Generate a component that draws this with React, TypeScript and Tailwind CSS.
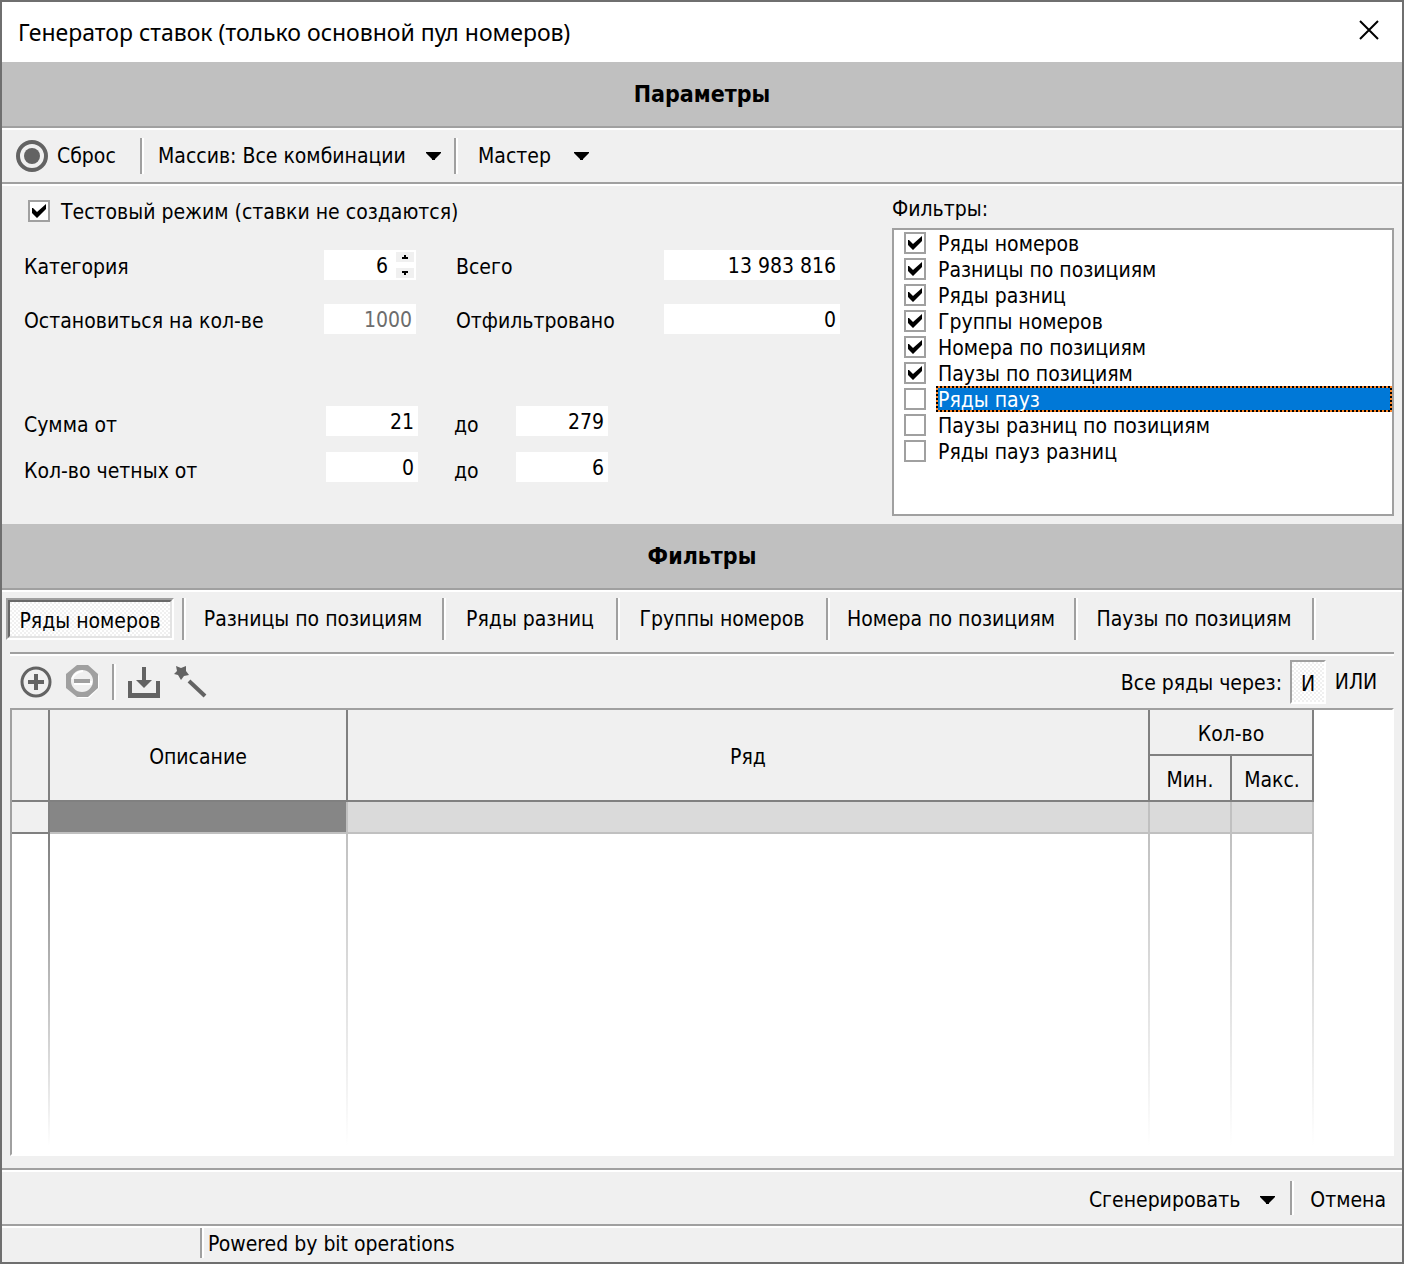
import React, { useState } from 'react';

const filterOptions = [
  { id: 'number-rows', label: 'Ряды номеров', checked: true },
  { id: 'position-diffs', label: 'Разницы по позициям', checked: true },
  { id: 'diff-rows', label: 'Ряды разниц', checked: true },
  { id: 'number-groups', label: 'Группы номеров', checked: true },
  { id: 'position-numbers', label: 'Номера по позициям', checked: true },
  { id: 'position-pauses', label: 'Паузы по позициям', checked: true },
  { id: 'pause-rows', label: 'Ряды пауз', checked: false },
  { id: 'position-diff-pauses', label: 'Паузы разниц по позициям', checked: false },
  { id: 'diff-pause-rows', label: 'Ряды пауз разниц', checked: false }
];

const tabs = [
  { label: 'Ряды номеров', width: 'w-[168px]' },
  { label: 'Разницы по позициям', width: 'w-[256px]' },
  { label: 'Ряды разниц', width: 'w-[170px]' },
  { label: 'Группы номеров', width: 'w-[206px]' },
  { label: 'Номера по позициям', width: 'w-[244px]' },
  { label: 'Паузы по позициям', width: 'w-[234px]' }
];

// Grooves: a grey line with a white one next to it
const groove = 'h-1 shrink-0 border-t-2 border-b-2 border-t-[#a0a0a0] border-b-white';
const vGroove = 'w-1 shrink-0 border-l-2 border-r-2 border-l-[#a0a0a0] border-r-white';

// Dithered fill of a pressed button
const dither = 'bg-[repeating-conic-gradient(#ffffff_0_25%,#f0f0f0_0_50%)] bg-[length:4px_4px]';

const SectionTitle: React.FC<{ children: React.ReactNode }> = ({ children }) => (
  <>
    <h2 className="flex h-16 shrink-0 items-center justify-center bg-[#c0c0c0] text-[23px] font-bold">
      {children}
    </h2>
    <div className={groove} />
  </>
);

const Arrow: React.FC = () => (
  <svg width="16" height="8" viewBox="0 0 16 8">
    <path d="M0 0h15v1l-6 6v1h-3v-1l-6-6z" />
  </svg>
);

interface CheckboxProps {
  id: string;
  defaultChecked: boolean;
}

const Checkbox: React.FC<CheckboxProps> = ({ id, defaultChecked }) => (
  <span className="grid h-[22px] w-[22px] shrink-0">
    <input
      id={id}
      type="checkbox"
      defaultChecked={defaultChecked}
      className="peer col-start-1 row-start-1 h-[22px] w-[22px] appearance-none border-2 border-[#a0a0a0] bg-white"
    />
    <svg
      className="pointer-events-none invisible col-start-1 row-start-1 peer-checked:visible"
      width="22"
      height="22"
      viewBox="0 0 22 22"
    >
      <path d="M4 8l1 0 4 4 9-8v5l-9 9-5-5z" />
    </svg>
  </span>
);

interface NumberFieldProps {
  id: string;
  value: string;
  className: string;
  disabled?: boolean;
}

const NumberField: React.FC<NumberFieldProps> = ({ id, value, className, disabled }) => (
  <input
    id={id}
    type="text"
    defaultValue={value}
    disabled={disabled}
    className={`h-[30px] bg-white pr-1 pt-0.5 text-right disabled:text-[#6d6d6d] ${className}`}
  />
);

const Toolbar: React.FC = () => (
  <div className="flex h-[52px] shrink-0 items-center">
    <button className="flex w-[138px] items-center gap-2 pl-[13px]">
      <svg width="34" height="34" viewBox="0 0 34 34">
        <circle cx="17" cy="17" r="14" fill="none" stroke="#636363" strokeWidth="4" />
        <circle cx="17" cy="17" r="8" fill="#636363" />
      </svg>
      Сброс
    </button>
    <div className={`h-9 ${vGroove}`} />
    <button className="flex w-[310px] items-center justify-between pl-[14px] pr-[12px]">
      Массив: Все комбинации
      <Arrow />
    </button>
    <div className={`h-9 ${vGroove}`} />
    <button className="flex w-[134px] items-center justify-between pl-5 pr-0.5">
      Мастер
      <Arrow />
    </button>
  </div>
);

const Parameters: React.FC = () => (
  <div className="flex shrink-0">
    <div className="w-[890px] shrink-0">
      <div className="flex h-9 items-end gap-[11px] pl-[26px]">
        <Checkbox id="test-mode" defaultChecked />
        <label htmlFor="test-mode" className="leading-5">Тестовый режим (ставки не создаются)</label>
      </div>

      <div className="mt-7 grid auto-rows-[30px] grid-cols-[300px_92px_40px_208px_176px] items-center gap-y-6 pl-[22px]">
        <label htmlFor="category" className="pt-1">Категория</label>
        <div className="flex h-[30px] bg-white">
          <NumberField id="category" value="6" className="w-[68px]" />
          <div className="ml-1 flex flex-col justify-between py-0.5">
            <button aria-label="Больше" className="flex h-[10px] w-[18px] items-center justify-center bg-[#f0f0f0]">
              <svg width="6" height="4" viewBox="0 0 6 4" shapeRendering="crispEdges"><path d="M2 0h2v2h2v2h-6v-2h2z" /></svg>
            </button>
            <button aria-label="Меньше" className="flex h-[10px] w-[18px] items-center justify-center bg-[#f0f0f0]">
              <svg width="6" height="4" viewBox="0 0 6 4" shapeRendering="crispEdges"><path d="M0 0h6v2h-2v2h-2v-2h-2z" /></svg>
            </button>
          </div>
        </div>
        <span />
        <label htmlFor="total" className="pt-1">Всего</label>
        <NumberField id="total" value="13 983 816" className="w-full" />

        <label htmlFor="stop-at" className="pt-1">Остановиться на кол-ве</label>
        <NumberField id="stop-at" value="1000" className="w-full" disabled />
        <span />
        <label htmlFor="filtered" className="pt-1">Отфильтровано</label>
        <NumberField id="filtered" value="0" className="w-full" />
      </div>

      <div className="mt-[72px] grid auto-rows-[30px] grid-cols-[302px_92px_98px_92px] items-center gap-y-4 pl-[22px]">
        <label htmlFor="sum-from" className="pt-2">Сумма от</label>
        <NumberField id="sum-from" value="21" className="w-full" />
        <label htmlFor="sum-to" className="pl-9 pt-2">до</label>
        <NumberField id="sum-to" value="279" className="w-full" />

        <label htmlFor="even-from" className="pt-2">Кол-во четных от</label>
        <NumberField id="even-from" value="0" className="w-full" />
        <label htmlFor="even-to" className="pl-9 pt-2">до</label>
        <NumberField id="even-to" value="6" className="w-full" />
      </div>
    </div>

    <div className="flex flex-1 flex-col pb-2 pr-2 pt-2">
      <h3 className="h-[34px] leading-[30px]">Фильтры:</h3>
      <ul className="h-72 border-2 border-[#a0a0a0] bg-white">
        {filterOptions.map((option) => (
          <li key={option.id} className="flex h-[26px] items-center gap-[10px] pl-[10px]">
            <Checkbox id={option.id} defaultChecked={option.checked} />
            {option.id === 'pause-rows' ? (
              <label
                htmlFor={option.id}
                className="h-[26px] flex-1 bg-[repeating-conic-gradient(#ff8728_0_25%,#000000_0_50%)] bg-[length:4px_4px] p-0.5"
              >
                <span className="block h-[22px] bg-[#0078d7] leading-6 text-white">{option.label}</span>
              </label>
            ) : (
              <label htmlFor={option.id} className="flex-1 pl-0.5 pt-0.5 leading-[26px]">{option.label}</label>
            )}
          </li>
        ))}
      </ul>
    </div>
  </div>
);

const FilterTabs: React.FC = () => {
  const [active, setActive] = useState('Ряды номеров');

  return (
    <div role="tablist" className="flex h-[60px] shrink-0 pl-1 pt-1.5">
      {tabs.map((tab, i) => (
        <React.Fragment key={tab.label}>
          <button
            role="tab"
            aria-selected={active === tab.label}
            onClick={() => setActive(tab.label)}
            className={`h-[42px] whitespace-nowrap ${tab.width} ${
              active === tab.label ? 'border-2 border-b-white border-l-[#a0a0a0] border-r-white border-t-[#a0a0a0]' : 'pr-0.5'
            }`}
          >
            {active === tab.label ? (
              <span className={`block h-[38px] border-2 border-b-[#e3e3e3] border-l-[#696969] border-r-[#e3e3e3] border-t-[#696969] leading-[38px] ${dither}`}>
                {tab.label}
              </span>
            ) : (
              tab.label
            )}
          </button>
          <div className={`h-[42px] ${vGroove} ${i === 0 ? 'ml-2' : ''}`} />
        </React.Fragment>
      ))}
    </div>
  );
};

const RowsToolbar: React.FC = () => (
  <div className="flex h-[52px] shrink-0 items-center pl-[18px] pr-4">
    <button aria-label="Добавить">
      <svg width="32" height="32" viewBox="0 0 32 32" fill="none" stroke="#636363">
        <circle cx="16" cy="16" r="14" strokeWidth="3" />
        <path d="M16 8v16M8 16h16" strokeWidth="4" />
      </svg>
    </button>
    <button aria-label="Удалить" className="ml-[14px]" disabled>
      <svg width="34" height="34" viewBox="0 0 34 34" fill="none">
        <path d="M13 2h10l10 9v12l-10 10h-11l-9-9z" fill="#ffffff" />
        <path d="M11 0h11l10 9v14l-10 9h-11l-11-9v-14z" fill="#a0a0a0" />
        <circle cx="16" cy="16" r="11" fill="#f0f0f0" />
        <path d="M8 19h17v-3M6 14q3-7 11-8" stroke="#ffffff" strokeWidth="2" />
        <path d="M8 16h16" stroke="#a0a0a0" strokeWidth="4" />
      </svg>
    </button>
    <div className={`ml-3 h-9 ${vGroove}`} />
    <button aria-label="Загрузить" className="ml-3">
      <svg width="32" height="32" viewBox="0 0 32 32" fill="#636363">
        <path d="M0 15h4v12h24V15h4v17H0z" />
        <path d="M14 1h4v13h6l-8 8-8-8h6z" />
      </svg>
    </button>
    <button aria-label="Мастер рядов" className="ml-[14px]">
      <svg width="34" height="34" viewBox="0 0 34 34" fill="#636363">
        <path d="M2 1l5 2 5-2v5l3 4-5 1-3 4-3-5-4-1 3-3z" />
        <path d="M15 16l16 15" stroke="#636363" strokeWidth="4" />
      </svg>
    </button>

    <span className="ml-auto pt-0.5">Все ряды через:</span>
    <button
      aria-pressed="true"
      className={`ml-2 h-11 w-9 border-2 border-b-white border-l-[#a0a0a0] border-r-white border-t-[#a0a0a0] pt-1 ${dither}`}
    >
      И
    </button>
    <button aria-pressed="false" className="w-[60px]">ИЛИ</button>
  </div>
);

const headCell = 'border-b-2 border-r-2 border-[#808080] p-0 pt-1 font-normal';
const bodyCell = 'border-b-2 border-r-2 border-[#c0c0c0] bg-[#dadada] p-0';
const guide = 'w-0.5 justify-self-end bg-linear-to-b from-[#c0c0c0] to-white';

const RowsTable: React.FC = () => (
  <div className="mx-2 mb-3 flex flex-1 flex-col border-2 border-b-white border-l-[#a0a0a0] border-r-white border-t-[#a0a0a0] bg-white pr-[78px]">
    <table className="w-full table-fixed border-separate border-spacing-0">
      <colgroup>
        <col className="w-[38px]" />
        <col className="w-[298px]" />
        <col />
        <col className="w-[82px]" />
        <col className="w-[82px]" />
      </colgroup>
      <thead className="bg-[#f0f0f0]">
        <tr className="h-[46px]">
          <th rowSpan={2} className={headCell} />
          <th rowSpan={2} className={headCell}>Описание</th>
          <th rowSpan={2} className={headCell}>Ряд</th>
          <th colSpan={2} className={headCell}>Кол-во</th>
        </tr>
        <tr className="h-[46px]">
          <th className={headCell}>Мин.</th>
          <th className={headCell}>Макс.</th>
        </tr>
      </thead>
      <tbody>
        <tr className="h-8">
          <td className="border-b-2 border-r-2 border-[#808080] bg-[#f0f0f0] p-0" />
          <td className="border-b-2 border-r-2 border-[#c0c0c0] bg-[#868686] p-0" />
          <td className={bodyCell} />
          <td className={bodyCell} />
          <td className={bodyCell} />
        </tr>
      </tbody>
    </table>
    {/* Column lines fading out below the last row */}
    <div className="grid min-h-40 flex-1 grid-cols-[38px_298px_1fr_82px_82px] pb-2">
      <div className="w-0.5 justify-self-end bg-linear-to-b from-[#808080] to-white" />
      <div className={guide} />
      <div className={guide} />
      <div className={guide} />
      <div className={guide} />
    </div>
  </div>
);

const App: React.FC = () => (
  <div className="flex min-h-screen w-full flex-col border-2 border-[#6f6f6f] bg-[#f0f0f0] font-['DejaVu_Sans_Condensed','DejaVu_Sans',sans-serif] text-[21px] leading-7 text-black">
    <header className="flex h-[60px] shrink-0 items-center justify-between bg-white pl-4 pr-[22px]">
      <h1 className="font-['Noto_Sans',sans-serif] text-[23px]">Генератор ставок (только основной пул номеров)</h1>
      <button aria-label="Закрыть" className="pb-1">
        <svg width="22" height="22" viewBox="0 0 22 22" stroke="#000000" strokeWidth="2">
          <path d="M2 2l18 18M20 2l-18 18" />
        </svg>
      </button>
    </header>

    <SectionTitle>Параметры</SectionTitle>
    <Toolbar />
    <div className={groove} />
    <Parameters />

    <SectionTitle>Фильтры</SectionTitle>
    <FilterTabs />
    <div className={`mx-2 ${groove}`} />
    <RowsToolbar />
    <RowsTable />

    <div className={groove} />
    <div className="flex h-[52px] shrink-0 items-center justify-end pr-4">
      <button className="flex items-center gap-5 pr-[14px] pt-1">
        Сгенерировать
        <Arrow />
      </button>
      <div className={`h-[34px] ${vGroove}`} />
      <button className="pl-4 pt-1">Отмена</button>
    </div>
    <div className={groove} />
    <footer className="flex h-[34px] shrink-0">
      <div className="w-[198px]" />
      <div className={`h-[30px] ${vGroove}`} />
      <span className="pl-1 leading-8">Powered by bit operations</span>
    </footer>
  </div>
);

export default App;
